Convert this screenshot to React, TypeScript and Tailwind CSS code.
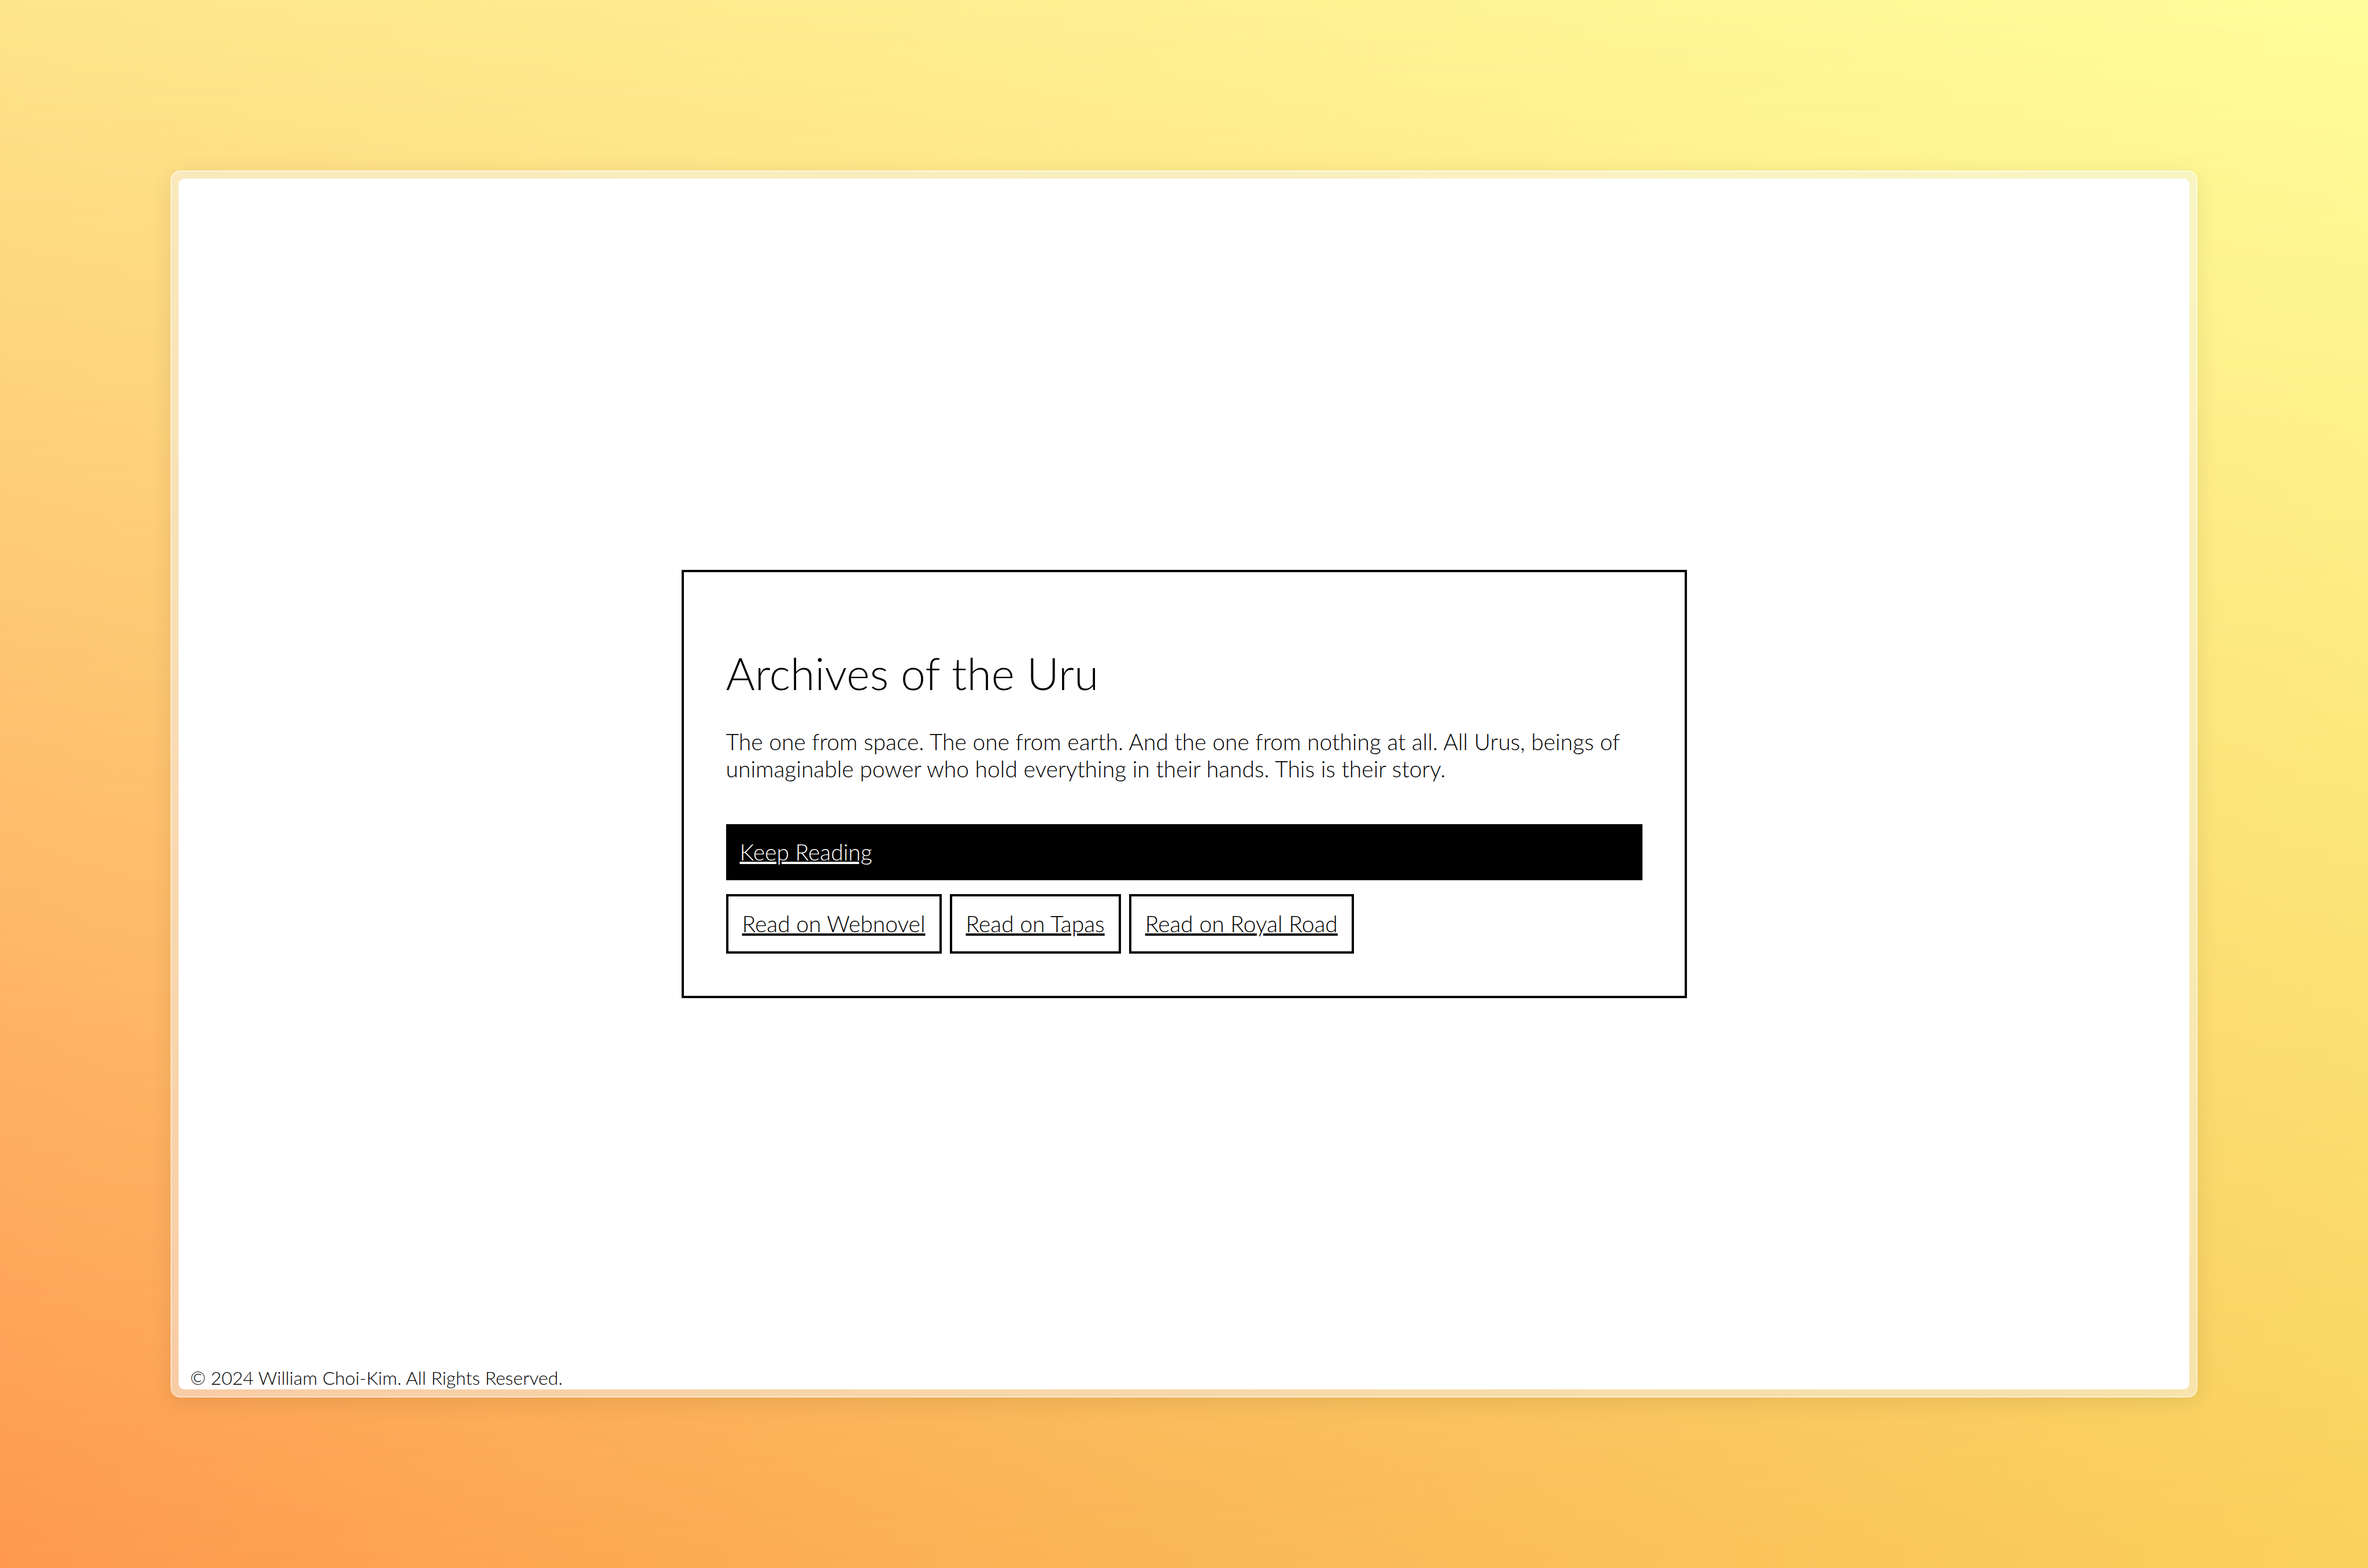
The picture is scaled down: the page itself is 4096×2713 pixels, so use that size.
const sources = [
  { name: "Webnovel", href: "#webnovel" },
  { name: "Tapas", href: "#tapas" },
  { name: "Royal Road", href: "#royal-road" },
];

export default function App() {
  return (
    <div className="relative isolate flex min-h-screen bg-linear-to-r from-[#fe994f] via-[#fab757] to-[#fad15d] p-[295px] font-['Lato',sans-serif] text-[39px] leading-[47px] font-light text-black antialiased">
      {/* Upper half of the four-corner colour wash */}
      <div className="absolute inset-0 -z-10 bg-linear-to-r from-[#fee58b] to-[#fffd9b] mask-b-from-0% mask-b-to-100%" />

      <div className="flex grow rounded-[17px] border-2 border-white/70 bg-[#f4f4f4]/50 bg-clip-padding p-3 shadow-[0_8px_40px_rgba(0,0,0,0.09)]">
        <div className="grid grow grid-rows-[1fr_auto_1fr] rounded-[10px] bg-white">
          <main className="row-start-2 w-1/2 justify-self-center border-4 border-black p-[73px]">
            <h1 className="mt-[55px] mb-[50px] text-[77px] leading-[92px]">Archives of the Uru</h1>
            <p className="mb-[72px]">
              The one from space. The one from earth. And the one from nothing at all. All Urus, beings of
              unimaginable power who hold everything in their hands. This is their story.
            </p>
            <a
              href="#read"
              className="mb-6 block bg-black px-6 py-[25px] text-white underline decoration-4 underline-offset-2"
            >
              Keep Reading
            </a>
            <nav aria-label="Other places to read" className="flex gap-[14px]">
              {sources.map((source) => (
                <a
                  key={source.name}
                  href={source.href}
                  className="border-4 border-black p-6 underline decoration-4 underline-offset-2"
                >
                  Read on {source.name}
                </a>
              ))}
            </nav>
          </main>
          <footer className="row-start-3 self-end pb-px pl-5 text-[32px] leading-[39px]">
            © 2024 William Choi-Kim. All Rights Reserved.
          </footer>
        </div>
      </div>
    </div>
  );
}
